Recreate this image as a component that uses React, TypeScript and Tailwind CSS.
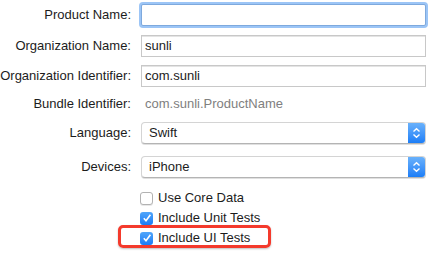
import React from "react";

const Label = ({ children }: { children: React.ReactNode }) => (
  <div className="w-[131px] shrink-0 text-right">{children}</div>
);

const TextField = ({ value, focused }: { value?: string; focused?: boolean }) => (
  <div
    className={
      focused
        ? "ml-[10px] h-[22px] w-[285px] rounded-[2px] border border-[#7ea9dd] bg-white ring-2 ring-[#9cc5f6]"
        : "ml-[10px] flex h-[22px] w-[285px] items-center border border-[#c8c8c8] bg-white pl-[3px] shadow-[inset_0_1px_0_#e4e4e4]"
    }
  >
    {value}
  </div>
);

const Popup = ({ value }: { value: string }) => (
  <div className="ml-[10px] flex h-[22px] w-[285px] overflow-hidden rounded-[4px] border border-[#d4d4d4] border-b-[#b4b4b4] bg-white shadow-[0_1px_0_#e0e0e0]">
    <div className="flex flex-1 items-center pl-[7px]">{value}</div>
    <div className="flex w-[17px] items-center justify-center bg-gradient-to-b from-[#69b1fb] to-[#1b7ef7]">
      <svg width="9" height="12" viewBox="0 0 9 12" fill="none">
        <path d="M1.5 4.5 L4.5 1.8 L7.5 4.5" stroke="white" strokeWidth="1.4" />
        <path d="M1.5 7.5 L4.5 10.2 L7.5 7.5" stroke="white" strokeWidth="1.4" />
      </svg>
    </div>
  </div>
);

const Checkbox = ({ checked, label }: { checked?: boolean; label: string }) => (
  <div className="flex h-[20px] items-center pl-[140px]">
    {checked ? (
      <div className="flex h-[13px] w-[13px] items-center justify-center rounded-[3px] bg-gradient-to-b from-[#4fa5fa] to-[#1a7cf6]">
        <svg width="10" height="10" viewBox="0 0 10 10" fill="none">
          <path d="M1.8 5.3 L4 7.8 L8.4 1.8" stroke="white" strokeWidth="1.6" />
        </svg>
      </div>
    ) : (
      <div className="h-[13px] w-[13px] rounded-[3px] border border-[#b2b2b2] bg-white shadow-[0_1px_0_#e8e8e8]" />
    )}
    <span className="ml-[5px]">{label}</span>
  </div>
);

export default function App() {
  return (
    <div
      className="h-[259px] w-[440px] bg-white pt-[4px] text-[13px] text-[#1c1c1c]"
      style={{ fontFamily: '"Liberation Sans", Arial, sans-serif' }}
    >
      <div className="flex h-[22px] items-center">
        <Label>Product Name:</Label>
        <TextField focused />
      </div>
      <div className="mt-[9px] flex h-[22px] items-center">
        <Label>Organization Name:</Label>
        <TextField value="sunli" />
      </div>
      <div className="mt-[8px] flex h-[22px] items-center">
        <Label>Organization Identifier:</Label>
        <TextField value="com.sunli" />
      </div>
      <div className="mt-[6px] flex h-[22px] items-center">
        <Label>Bundle Identifier:</Label>
        <div className="ml-[14px] text-[#808080]">com.sunli.ProductName</div>
      </div>
      <div className="mt-[7px] flex h-[22px] items-center">
        <Label>Language:</Label>
        <Popup value="Swift" />
      </div>
      <div className="mt-[12px] flex h-[22px] items-center">
        <Label>Devices:</Label>
        <Popup value="iPhone" />
      </div>
      <div className="mt-[10px]">
        <Checkbox label="Use Core Data" />
        <Checkbox checked label="Include Unit Tests" />
        <div className="relative">
          <Checkbox checked label="Include UI Tests" />
          <div className="absolute left-[118px] top-[-3px] h-[23px] w-[153px] rounded-[5px] border-[3px] border-[#f43a2c] shadow-[0_1px_2px_rgba(0,0,0,0.25)]" />
        </div>
      </div>
    </div>
  );
}
